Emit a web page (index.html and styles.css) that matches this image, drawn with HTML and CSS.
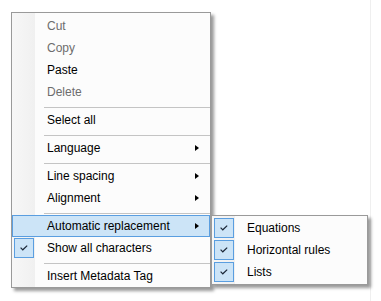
FILE: index.html
```html
<!DOCTYPE html>
<html lang="en">
<head>
  <meta charset="UTF-8" />
  <title>Context menu</title>
  <link rel="stylesheet" href="styles.css">
</head>
<body>
<div class="screen">
  <div class="menu">
    <div class="item disabled"><span class="gutter"></span><span class="label">Cut</span></div>
    <div class="item disabled"><span class="gutter"></span><span class="label">Copy</span></div>
    <div class="item"><span class="gutter"></span><span class="label">Paste</span></div>
    <div class="item disabled"><span class="gutter"></span><span class="label">Delete</span></div>
    <div class="sep"></div>
    <div class="item"><span class="gutter"></span><span class="label">Select all</span></div>
    <div class="sep"></div>
    <div class="item"><span class="gutter"></span><span class="label">Language</span><span class="arrow"></span></div>
    <div class="sep"></div>
    <div class="item"><span class="gutter"></span><span class="label">Line spacing</span><span class="arrow"></span></div>
    <div class="item"><span class="gutter"></span><span class="label">Alignment</span><span class="arrow"></span></div>
    <div class="sep"></div>
    <div class="item open">
      <span class="gutter"></span><span class="label">Automatic replacement</span><span class="arrow"></span>
      <div class="menu submenu">
        <div class="item"><span class="gutter"><span class="check"><svg width="8" height="6" viewBox="0 0 8 6"><polyline points="0.6,2.6 2.8,4.8 7.2,0.6" fill="none" stroke="#1c2838" stroke-width="1.2"/></svg></span></span><span class="label">Equations</span></div>
        <div class="item"><span class="gutter"><span class="check"><svg width="8" height="6" viewBox="0 0 8 6"><polyline points="0.6,2.6 2.8,4.8 7.2,0.6" fill="none" stroke="#1c2838" stroke-width="1.2"/></svg></span></span><span class="label">Horizontal rules</span></div>
        <div class="item"><span class="gutter"><span class="check"><svg width="8" height="6" viewBox="0 0 8 6"><polyline points="0.6,2.6 2.8,4.8 7.2,0.6" fill="none" stroke="#1c2838" stroke-width="1.2"/></svg></span></span><span class="label">Lists</span></div>
      </div>
    </div>
    <div class="item"><span class="gutter"><span class="check"><svg width="8" height="6" viewBox="0 0 8 6"><polyline points="0.6,2.6 2.8,4.8 7.2,0.6" fill="none" stroke="#1c2838" stroke-width="1.2"/></svg></span></span><span class="label">Show all characters</span></div>
    <div class="sep"></div>
    <div class="item"><span class="gutter"></span><span class="label">Insert Metadata Tag</span></div>
  </div>
</div>
</body>
</html>
```

FILE: styles.css
```css
:root {
  --borda: #9a9a9a;
  --fundo: #fcfcfc;
  --azul-claro: #cce4f7;
  --azul-borda: #5a9ee0;
  --cinza-texto: #6d6d6d;
}

* { box-sizing: border-box; margin: 0; padding: 0; }

body {
  background: #fff;
  font-family: "Segoe UI", "Liberation Sans", sans-serif;
  font-size: 12px;
  color: #000;
}

.screen {
  width: 371px;
  height: 301px;
  padding: 12px 0 0 11px;
  border-right: 1px solid #efefef;
}

.menu {
  position: relative;
  width: 200px;
  padding-top: 2px;
  border: 1px solid var(--borda);
  background: linear-gradient(to right, #f7f7f7 0, #f0f0f0 23px, var(--fundo) 23px);
  box-shadow: 3px 3px 3px rgba(0, 0, 0, 0.4);
}

.item {
  display: flex;
  align-items: center;
  height: 22px;
  border: 1px solid transparent;
}

.item.disabled { color: var(--cinza-texto); }

.item.open {
  position: relative;
  background: var(--azul-claro);
  border-color: var(--azul-borda);
}

.gutter {
  width: 34px;
  height: 100%;
  display: flex;
  align-items: center;
}

.check {
  width: 20px;
  height: 20px;
  margin-left: 1px;
  display: flex;
  align-items: center;
  justify-content: center;
  background: var(--azul-claro);
  border: 1px solid var(--azul-borda);
}

.label {
  flex: 1;
  white-space: nowrap;
}

.arrow {
  width: 0;
  height: 0;
  margin-right: 10px;
  border-left: 4px solid #000;
  border-top: 3.5px solid transparent;
  border-bottom: 3.5px solid transparent;
}

.sep {
  height: 6px;
  padding-top: 4px;
  margin-left: 32px;
}

.sep::before {
  content: "";
  display: block;
  height: 1px;
  background: #c4c4c4;
}

.submenu {
  position: absolute;
  left: calc(100% + 2px);
  top: -1px;
  width: 157px;
  padding: 1px 0;
}
```
